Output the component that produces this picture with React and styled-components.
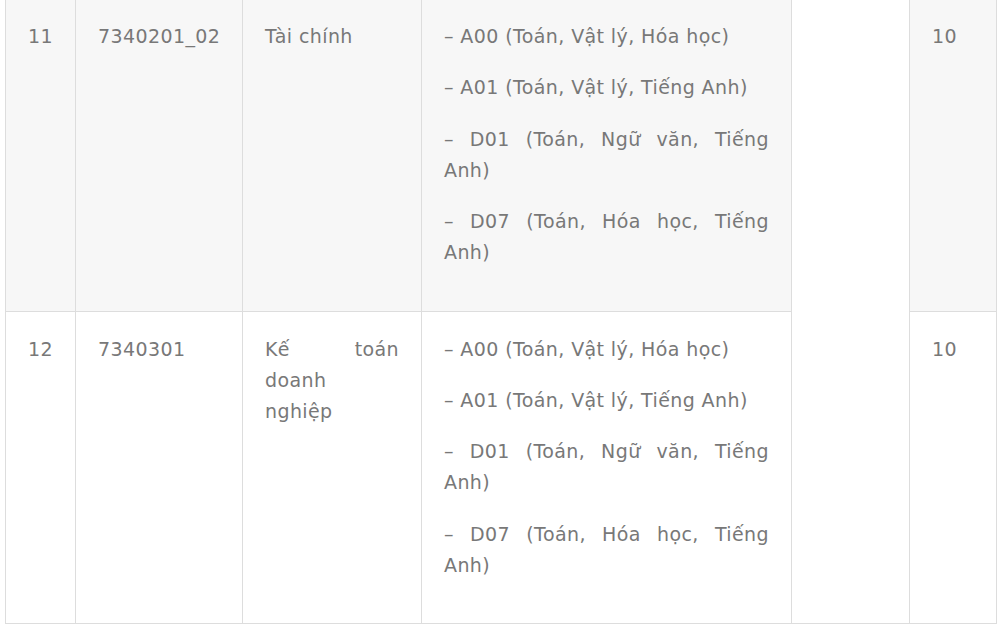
import React from "react";
import styled, { createGlobalStyle } from "styled-components";

const Global = createGlobalStyle`
  html, body { margin: 0; padding: 0; background: #ffffff; }
  body { font-family: "DejaVu Sans", "Noto Sans", sans-serif; }
`;

const Page = styled.div`
  width: 1000px;
  height: 632px;
  overflow: hidden;
  padding-left: 5px;
  box-sizing: border-box;
`;

const Table = styled.table`
  margin-top: -2px;
  width: 991px;
  border-collapse: collapse;
  table-layout: fixed;
  font-family: "DejaVu Sans", "Noto Sans", sans-serif;
  font-size: 19px;
  letter-spacing: 0.4px;
  line-height: 31px;
  color: #787878;
`;

const Col = styled.col`
  width: ${(p) => p.$w}px;
`;

const Row = styled.tr`
  background: ${(p) => (p.$striped ? "#f7f7f7" : "#ffffff")};
`;

const Cell = styled.td`
  border: 1px solid #dddddd;
  padding: 22px;
  vertical-align: top;
  text-align: ${(p) => (p.$justify ? "justify" : "left")};
  background: ${(p) => (p.$blank ? "#ffffff" : "inherit")};
`;

const Para = styled.p`
  margin: 0 0 20.4px 0;
  text-align: justify;
`;

const widths = [70, 167, 179, 370, 118, 87];

const combos = [
  "– A00 (Toán, Vật lý, Hóa học)",
  "– A01 (Toán, Vật lý, Tiếng Anh)",
  "– D01 (Toán, Ngữ văn, Tiếng Anh)",
  "– D07 (Toán, Hóa học, Tiếng Anh)",
];

const rows = [
  { no: "11", code: "7340201_02", name: "Tài chính", quota: "10" },
  { no: "12", code: "7340301", name: "Kế toán doanh nghiệp", quota: "10" },
];

export default function App() {
  return (
    <>
      <Global />
      <Page>
        <Table>
          <colgroup>
            {widths.map((w, i) => (
              <Col key={i} $w={w} />
            ))}
          </colgroup>
          <tbody>
            {rows.map((r, i) => (
              <Row key={r.no} $striped={i === 0}>
                <Cell>{r.no}</Cell>
                <Cell>{r.code}</Cell>
                <Cell $justify>{r.name}</Cell>
                <Cell>
                  {combos.map((c) => (
                    <Para key={c}>{c}</Para>
                  ))}
                </Cell>
                {i === 0 && <Cell rowSpan={2} $blank />}
                <Cell>{r.quota}</Cell>
              </Row>
            ))}
          </tbody>
        </Table>
      </Page>
    </>
  );
}
